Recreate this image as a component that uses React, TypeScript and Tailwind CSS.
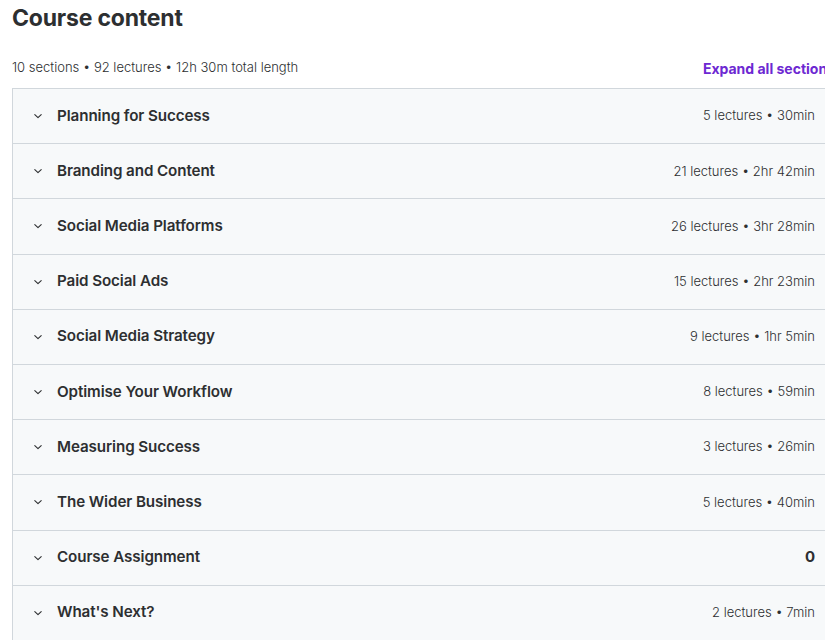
import React from "react";

const sections: { title: string; meta: string; bold?: boolean }[] = [
  { title: "Planning for Success", meta: "5 lectures • 30min" },
  { title: "Branding and Content", meta: "21 lectures • 2hr 42min" },
  { title: "Social Media Platforms", meta: "26 lectures • 3hr 28min" },
  { title: "Paid Social Ads", meta: "15 lectures • 2hr 23min" },
  { title: "Social Media Strategy", meta: "9 lectures • 1hr 5min" },
  { title: "Optimise Your Workflow", meta: "8 lectures • 59min" },
  { title: "Measuring Success", meta: "3 lectures • 26min" },
  { title: "The Wider Business", meta: "5 lectures • 40min" },
  { title: "Course Assignment", meta: "0", bold: true },
  { title: "What's Next?", meta: "2 lectures • 7min" },
];

function Chevron() {
  return (
    <svg width="10" height="10" viewBox="0 0 10 10" className="shrink-0">
      <path d="M1.8 3.6 L5 6.6 L8.2 3.6" fill="none" stroke="#2d2f31" strokeWidth="1.1" strokeLinecap="round" strokeLinejoin="round" />
    </svg>
  );
}

export default function App() {
  return (
    <div className="w-[825px] h-[640px] overflow-hidden bg-white text-[#2d2f31]" style={{ fontFamily: "Inter, 'Noto Sans', sans-serif" }}>
      <div className="w-[828px] ml-[12px]">
        <h2 className="text-[23px] font-bold leading-none pt-[7px] tracking-[-0.2px]">Course content</h2>
        <div className="flex items-center justify-between mt-[28px] h-[20px]">
          <span className="text-[13px] font-light text-[#2d2f31]">10 sections • 92 lectures • 12h 30m total length</span>
          <span className="text-[14px] font-bold text-[#6d28d2] pr-[5px]">Expand all sections</span>
        </div>
        <div className="mt-[10px] border border-[#d1d7dc] border-b-0">
          {sections.map((s) => (
            <div key={s.title} className="h-[55.2px] bg-[#f7f9fa] border-b border-[#d1d7dc] flex items-center pl-[20px] pr-[24px]">
              <Chevron />
              <span className="ml-[14px] text-[15.2px] font-semibold tracking-[-0.1px]">{s.title}</span>
              <span className={"ml-auto " + (s.bold ? "text-[15px] font-bold" : "text-[13px] font-light text-[#2d2f31]")}>{s.meta}</span>
            </div>
          ))}
        </div>
      </div>
    </div>
  );
}
